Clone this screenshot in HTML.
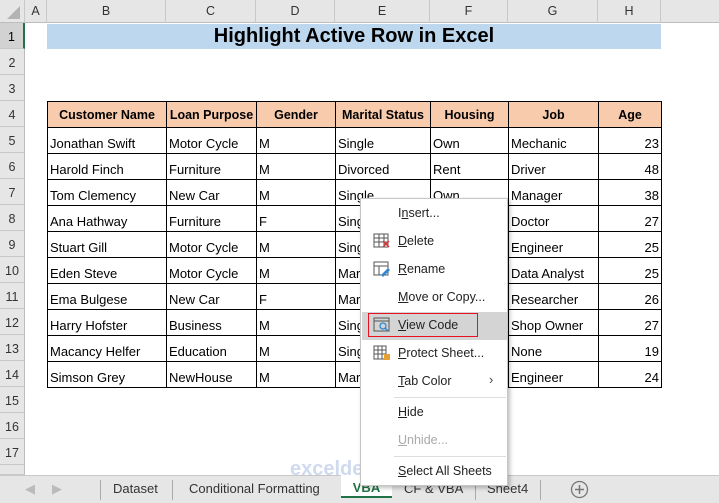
<!DOCTYPE html>
<html><head><meta charset="utf-8"><style>
*{margin:0;padding:0;box-sizing:border-box}
body{width:719px;height:503px;overflow:hidden;background:#fff;font-family:"Liberation Sans",sans-serif;position:relative;font-size:13px;color:#000}
.abs{position:absolute}
.colh{position:absolute;top:0;height:23px;background:#e6e6e6;border-right:1px solid #c8c8c8;border-bottom:1px solid #bdbdbd;text-align:center;line-height:23px;font-size:12.5px;color:#333}
.rowh{position:absolute;left:0;width:25px;height:26px;background:#e6e6e6;border-bottom:1px solid #c8c8c8;border-right:1px solid #bdbdbd;text-align:center;line-height:28px;font-size:12.5px;color:#333}
table{position:absolute;left:47px;top:101px;border-collapse:collapse;table-layout:fixed}
td{border:1px solid #000;height:26px;padding:7px 2px 0 2px;white-space:nowrap;overflow:hidden;font-size:13px;line-height:18px}
th{border:1px solid #000;height:26px;background:#f8cbad;font-size:12.5px;font-weight:bold;white-space:nowrap;padding-top:1px;overflow:hidden}
td.r{text-align:right}
.menu{position:absolute;left:360px;top:198px;width:148px;height:288px;background:#fff;border:1px solid #c6c6c6;box-shadow:2px 2px 4px rgba(0,0,0,.25)}
.mi{position:absolute;left:37px;font-size:12.5px;color:#222}
.mi u{text-decoration:underline}
.tabs{position:absolute;left:0;top:475px;width:719px;height:28px;background:#e6e6e6;border-top:1px solid #c8c8c8}
.tab{position:absolute;top:5px;font-size:13px;color:#333}
.sep{position:absolute;top:4px;width:1px;height:20px;background:#aaa}
</style></head><body>
<div class="colh" style="left:0;width:25px"><svg width="25" height="23"><path d="M20 6 L20 19 L7 19 Z" fill="#b3b3b3"/></svg></div>
<div class="colh" style="left:25px;width:22px">A</div>
<div class="colh" style="left:47px;width:119px">B</div>
<div class="colh" style="left:166px;width:90px">C</div>
<div class="colh" style="left:256px;width:79px">D</div>
<div class="colh" style="left:335px;width:95px">E</div>
<div class="colh" style="left:430px;width:78px">F</div>
<div class="colh" style="left:508px;width:90px">G</div>
<div class="colh" style="left:598px;width:63px">H</div>
<div class="colh" style="left:661px;width:58px;border-right:none"></div>

<div class="rowh" style="top:23px;background:#d2d2d2;border-right:2px solid #217346;color:#000">1</div>
<div class="rowh" style="top:49px">2</div>
<div class="rowh" style="top:75px">3</div>
<div class="rowh" style="top:101px">4</div>
<div class="rowh" style="top:127px">5</div>
<div class="rowh" style="top:153px">6</div>
<div class="rowh" style="top:179px">7</div>
<div class="rowh" style="top:205px">8</div>
<div class="rowh" style="top:231px">9</div>
<div class="rowh" style="top:257px">10</div>
<div class="rowh" style="top:283px">11</div>
<div class="rowh" style="top:309px">12</div>
<div class="rowh" style="top:335px">13</div>
<div class="rowh" style="top:361px">14</div>
<div class="rowh" style="top:387px">15</div>
<div class="rowh" style="top:413px">16</div>
<div class="rowh" style="top:439px">17</div>
<div class="rowh" style="top:465px;height:10px"></div>

<div class="abs" style="left:47px;top:24px;width:614px;height:25px;background:#bdd7ee;text-align:center;font-weight:bold;font-size:20px;line-height:25px">Highlight Active Row in Excel</div>

<table>
<colgroup><col style="width:119px"><col style="width:90px"><col style="width:79px"><col style="width:95px"><col style="width:78px"><col style="width:90px"><col style="width:63px"></colgroup>
<tr><th>Customer Name</th><th>Loan Purpose</th><th>Gender</th><th>Marital Status</th><th>Housing</th><th>Job</th><th>Age</th></tr>
<tr><td>Jonathan Swift</td><td>Motor Cycle</td><td>M</td><td>Single</td><td>Own</td><td>Mechanic</td><td class="r">23</td></tr>
<tr><td>Harold Finch</td><td>Furniture</td><td>M</td><td>Divorced</td><td>Rent</td><td>Driver</td><td class="r">48</td></tr>
<tr><td>Tom Clemency</td><td>New Car</td><td>M</td><td>Single</td><td>Own</td><td>Manager</td><td class="r">38</td></tr>
<tr><td>Ana Hathway</td><td>Furniture</td><td>F</td><td>Single</td><td>Own</td><td>Doctor</td><td class="r">27</td></tr>
<tr><td>Stuart Gill</td><td>Motor Cycle</td><td>M</td><td>Single</td><td>Own</td><td>Engineer</td><td class="r">25</td></tr>
<tr><td>Eden Steve</td><td>Motor Cycle</td><td>M</td><td>Married</td><td>Own</td><td>Data Analyst</td><td class="r">25</td></tr>
<tr><td>Ema Bulgese</td><td>New Car</td><td>F</td><td>Married</td><td>Own</td><td>Researcher</td><td class="r">26</td></tr>
<tr><td>Harry Hofster</td><td>Business</td><td>M</td><td>Single</td><td>Own</td><td>Shop Owner</td><td class="r">27</td></tr>
<tr><td>Macancy Helfer</td><td>Education</td><td>M</td><td>Single</td><td>Own</td><td>None</td><td class="r">19</td></tr>
<tr><td>Simson Grey</td><td>NewHouse</td><td>M</td><td>Married</td><td>Own</td><td>Engineer</td><td class="r">24</td></tr>
</table>

<div class="abs" style="left:290px;top:458px;font-size:20px;font-weight:bold;color:rgba(120,150,210,.35)">exceldemy</div>

<div class="tabs">
<span class="tab" style="left:25px;color:#bbb">&#9664;</span><span class="tab" style="left:52px;color:#bbb">&#9654;</span>
<div class="sep" style="left:100px"></div>
<span class="tab" style="left:113px">Dataset</span>
<div class="sep" style="left:172px"></div>
<span class="tab" style="left:189px">Conditional Formatting</span>
<div class="abs" style="left:341px;top:-1px;width:51px;height:23px;background:#fff;border-bottom:2px solid #217346;text-align:center;font-weight:bold;color:#217346;padding-top:5px">VBA</div>
<span class="tab" style="left:404px">CF &amp; VBA</span>
<div class="sep" style="left:475px"></div>
<span class="tab" style="left:487px">Sheet4</span>
<div class="sep" style="left:540px"></div>
<svg class="abs" style="left:570px;top:4px" width="19" height="19"><circle cx="9.5" cy="9.5" r="8" fill="none" stroke="#777" stroke-width="1.3"/><path d="M9.5 5v9M5 9.5h9" stroke="#777" stroke-width="1.5"/></svg>
</div>

<div class="menu">
<div class="abs" style="left:1px;top:113px;width:145px;height:28px;background:#d4d4d4"></div>
<div class="abs" style="left:7px;top:114px;width:110px;height:24px;border:1px solid #e81123"></div>
<span class="mi" style="top:7px">I<u>n</u>sert...</span>
<svg class="abs" style="left:12px;top:34px" width="18" height="16"><path d="M1 1h14v13H1zM1 5h14M1 9h14M6 1v13M11 1v13" fill="none" stroke="#555"/><path d="M10 8l6 6M16 8l-6 6" stroke="#e03030" stroke-width="1.4"/></svg>
<span class="mi" style="top:35px"><u>D</u>elete</span>
<svg class="abs" style="left:12px;top:62px" width="18" height="16"><path d="M1 1h14v13H1zM1 5h14M6 5v9" fill="none" stroke="#555"/><path d="M8 14l7-7 2 2-7 7z" fill="#2e87d0"/></svg>
<span class="mi" style="top:63px"><u>R</u>ename</span>
<span class="mi" style="top:91px"><u>M</u>ove or Copy...</span>
<svg class="abs" style="left:12px;top:118px" width="18" height="16"><path d="M1 1h15v13H1zM1 4h15" fill="none" stroke="#555"/><circle cx="10" cy="9" r="3" fill="none" stroke="#2e87d0" stroke-width="1.3"/><path d="M12 11l3 3" stroke="#2e87d0" stroke-width="1.5"/></svg>
<span class="mi" style="top:119px"><u>V</u>iew Code</span>
<svg class="abs" style="left:12px;top:146px" width="18" height="16"><path d="M1 1h12v13H1zM1 5h12M1 9h12M5 1v13M9 1v13" fill="none" stroke="#555"/><rect x="11" y="9" width="6" height="6" fill="#e8a030"/></svg>
<span class="mi" style="top:147px"><u>P</u>rotect Sheet...</span>
<span class="mi" style="top:175px"><u>T</u>ab Color</span>
<span class="abs" style="left:128px;top:173px;font-size:13px;color:#444">&#8250;</span>
<div class="abs" style="left:33px;top:198px;width:112px;height:1px;background:#ddd"></div>
<span class="mi" style="top:206px"><u>H</u>ide</span>
<span class="mi" style="top:234px;color:#aaa"><u>U</u>nhide...</span>
<div class="abs" style="left:33px;top:257px;width:112px;height:1px;background:#ddd"></div>
<span class="mi" style="top:265px"><u>S</u>elect All Sheets</span>
</div>
</body></html>
